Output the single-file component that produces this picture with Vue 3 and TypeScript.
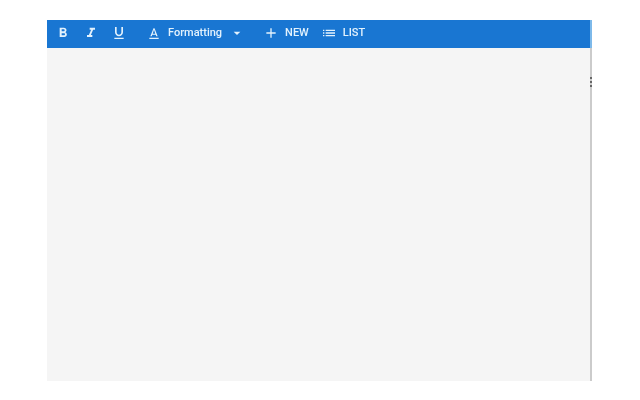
<script setup lang="ts">
const formatIcons = [
  { name: 'bold', d: 'M15.6 10.79c.97-.67 1.65-1.77 1.65-2.79 0-2.26-1.75-4-4-4H7v14h7.04c2.09 0 3.71-1.7 3.71-3.79 0-1.52-.86-2.82-2.15-3.42zM10 6.5h3c.83 0 1.5.67 1.5 1.5s-.67 1.5-1.5 1.5h-3v-3zm3.5 9H10v-3h3.5c.83 0 1.5.67 1.5 1.5s-.67 1.5-1.5 1.5z' },
  { name: 'italic', d: 'M10 4v3h2.21l-3.42 8H6v3h8v-3h-2.21l3.42-8H18V4z' },
  { name: 'underline', d: 'M12 17c3.31 0 6-2.69 6-6V3h-2.5v8c0 1.93-1.57 3.5-3.5 3.5S8.5 12.93 8.5 11V3H6v8c0 3.31 2.69 6 6 6zm-7 2v2h14v-2H5z' },
]
</script>

<template>
  <div class="page">
    <section class="panel">
      <header class="toolbar">
        <div class="format-group">
          <button v-for="icon in formatIcons" :key="icon.name" class="icon-btn" type="button" :aria-label="icon.name">
            <svg viewBox="0 0 24 24" class="icon"><path :d="icon.d" /></svg>
          </button>
        </div>
        <button class="tool formatting" type="button">
          <svg viewBox="0 0 24 24" class="icon"><path d="M5 19v2h14v-2H5zm4.5-4.2h5l.9 2.2h2.1L12.75 5h-1.5L6.5 17h2.1l.9-2.2zM12 7l1.87 6h-3.74L12 7z" /></svg>
          <span class="label">Formatting</span>
          <svg viewBox="0 0 24 24" class="caret"><path d="M7 10l5 5 5-5z" /></svg>
        </button>
        <button class="tool new" type="button">
          <svg viewBox="0 0 24 24" class="icon"><path d="M19 13h-6v6h-2v-6H5v-2h6V5h2v6h6v2z" /></svg>
          <span class="label">NEW</span>
        </button>
        <button class="tool list" type="button">
          <svg viewBox="0 0 24 24" class="icon"><path d="M3 13h2v-2H3v2zm0 4h2v-2H3v2zm0-8h2V7H3v2zm4 4h14v-2H7v2zm0 4h14v-2H7v2zM7 7v2h14V7H7z" /></svg>
          <span class="label">LIST</span>
        </button>
      </header>
      <div class="body"></div>
      <div class="grip" aria-hidden="true"><i></i><i></i><i></i></div>
    </section>
  </div>
</template>

<style scoped>
.page {
  width: 640px;
  height: 400px;
  box-sizing: border-box;
  padding: 20px 0 0 47px;
  background: #fff;
  overflow: hidden;
  font-family: Roboto, "Liberation Sans", sans-serif;
}
.panel {
  position: relative;
  width: 543px;
  height: 361px;
  display: flex;
  flex-direction: column;
  background: #f5f5f5;
  border-right: 2px solid #cbcbcb;
}
.toolbar {
  height: 28px;
  box-sizing: border-box;
  flex: none;
  display: flex;
  align-items: center;
  padding: 0 0 2px 7px;
  background: #1976d2;
  color: #e3f2fd;
  margin-right: -2px;
  border-right: 2px solid #7db9ea;
}
button {
  all: unset;
  display: flex;
  align-items: center;
  color: inherit;
  filter: blur(0.3px);
}
.format-group {
  display: flex;
  gap: 10px;
}
.icon-btn {
  width: 18px;
  height: 18px;
  justify-content: center;
}
.icon {
  width: 16px;
  height: 16px;
  fill: currentColor;
  flex: none;
}
.tool {
  gap: 6px;
}
.formatting {
  margin-left: 18px;
}
.new {
  margin-left: 18px;
}
.list {
  margin-left: 12px;
}
.label {
  font-size: 11px;
  font-weight: 500;
  line-height: 14px;
  white-space: nowrap;
}
.caret {
  width: 16px;
  height: 16px;
  fill: currentColor;
  margin-left: 1px;
}
.body {
  flex: 1;
}
.grip {
  position: absolute;
  right: -2px;
  top: 57px;
  display: flex;
  flex-direction: column;
  gap: 2px;
}
.grip i {
  display: block;
  width: 2px;
  height: 2px;
  background: #666;
}
</style>
